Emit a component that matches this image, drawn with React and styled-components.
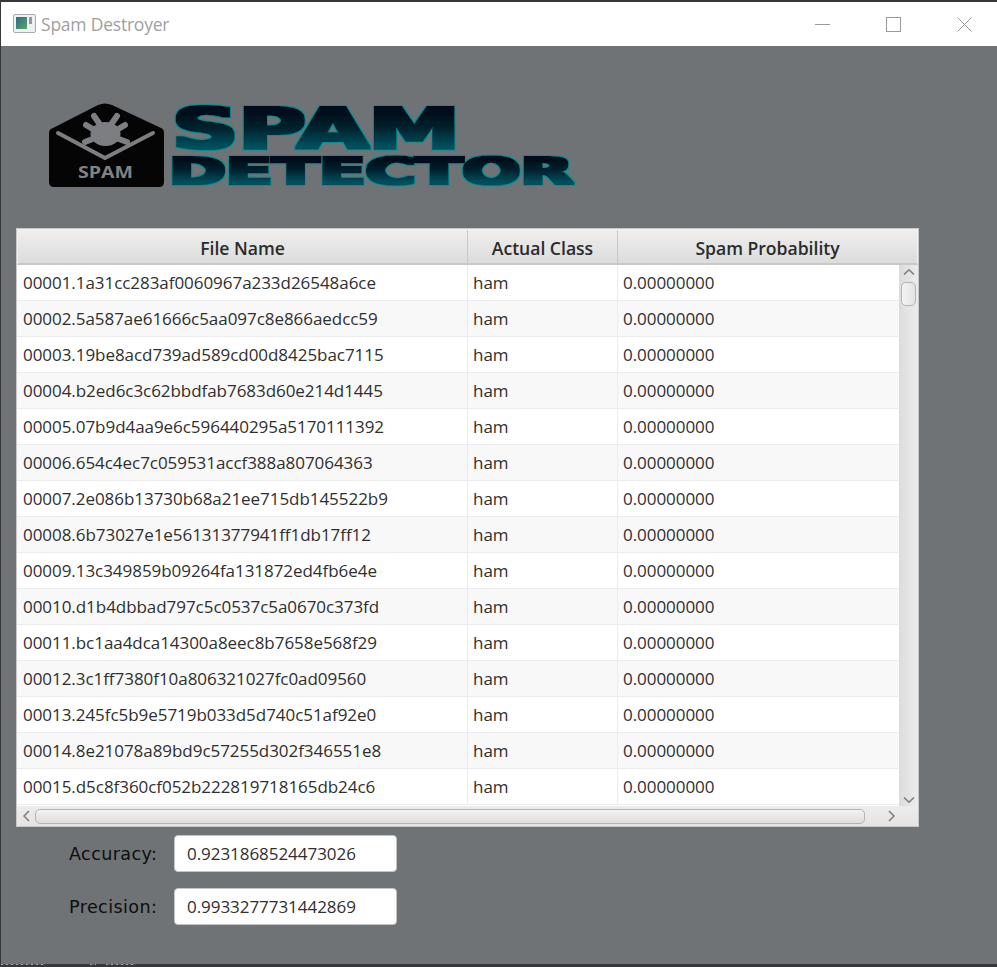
import React from 'react';
import styled, { createGlobalStyle } from 'styled-components';

const GlobalStyle = createGlobalStyle`
  html, body {
    margin: 0;
    padding: 0;
    background: #3a3c3e;
  }
  * { box-sizing: border-box; }
`;

const files = [
  '00001.1a31cc283af0060967a233d26548a6ce',
  '00002.5a587ae61666c5aa097c8e866aedcc59',
  '00003.19be8acd739ad589cd00d8425bac7115',
  '00004.b2ed6c3c62bbdfab7683d60e214d1445',
  '00005.07b9d4aa9e6c596440295a5170111392',
  '00006.654c4ec7c059531accf388a807064363',
  '00007.2e086b13730b68a21ee715db145522b9',
  '00008.6b73027e1e56131377941ff1db17ff12',
  '00009.13c349859b09264fa131872ed4fb6e4e',
  '00010.d1b4dbbad797c5c0537c5a0670c373fd',
  '00011.bc1aa4dca14300a8eec8b7658e568f29',
  '00012.3c1ff7380f10a806321027fc0ad09560',
  '00013.245fc5b9e5719b033d5d740c51af92e0',
  '00014.8e21078a89bd9c57255d302f346551e8',
  '00015.d5c8f360cf052b222819718165db24c6',
];

const Page = styled.div`
  width: 997px;
  height: 967px;
  display: flex;
  flex-direction: column;
  padding: 2px 0 0 1px;
  background: #35373a;
  overflow: hidden;
`;

const Window = styled.div`
  flex: 1;
  min-height: 0;
  display: flex;
  flex-direction: column;
  background: #6f7376;
`;

/* bit of the desktop that shows under the window */
const DesktopStrip = styled.div`
  height: 3px;
  flex: none;
  display: flex;
  align-items: flex-start;
  background: #35373a;
`;

const DesktopMark = styled.div`
  width: ${props => props.$w}px;
  margin-right: ${props => props.$gap}px;
  height: 1px;
  background: repeating-linear-gradient(90deg, #a2a4a6 0 2px, #4a4c4e 2px 5px);
`;

const TitleBar = styled.div`
  height: 44px;
  flex: none;
  display: flex;
  align-items: center;
  padding-left: 12px;
  background: #fff;
`;

const IconSvg = styled.svg`
  margin-bottom: 2px;
`;

const AppTitle = styled.span`
  margin-left: 5px;
  font: 17.5px 'Open Sans', sans-serif;
  letter-spacing: -0.22px;
  color: #9f9f9f;
`;

const WinButtons = styled.div`
  margin-left: auto;
  display: flex;
  align-items: center;
  gap: 6px;
`;

const WinButton = styled.div`
  width: 65px;
  display: flex;
  justify-content: center;
`;

const Content = styled.div`
  flex: 1;
  padding: 57px 0 0 15px;
`;

const LogoRow = styled.div`
  display: flex;
  height: 125px;
  padding-left: 32px;
`;

const LogoSvg = styled.svg`
  margin: -10px 0 0 5px;
`;

const Frame = styled.div`
  width: 903px;
  height: 599px;
  display: flex;
  flex-direction: column;
  border: 1px solid #c8c8c8;
  background: #fff;
`;

const HeaderRow = styled.div`
  height: 36px;
  flex: none;
  display: grid;
  grid-template-columns: 450px 150px 1fr;
  border: 1px solid #f1f1f1;
  border-bottom: 2px solid #c8c8c8;
  background: linear-gradient(#efefef, #dcdcdc);
`;

const HeaderCell = styled.div`
  display: flex;
  align-items: center;
  justify-content: center;
  padding-top: 3px;
  border-right: 1px solid #c8c8c8;
  font: 600 17.6px 'Open Sans', sans-serif;
  letter-spacing: -0.02px;
  color: #2b2b2b;

  &:last-child { border-right: 0; }
`;

const BodyRow = styled.div`
  flex: 1;
  min-height: 0;
  display: flex;
`;

const Rows = styled.div`
  flex: 1;
  overflow: hidden;
`;

const Row = styled.div`
  height: 36px;
  display: grid;
  grid-template-columns: 451px 150px 1fr;
  border-bottom: 1px solid #ececec;
  background: ${props => props.$odd ? '#f8f8f8' : '#fff'};
`;

const Cell = styled.div`
  display: flex;
  align-items: center;
  padding-left: 5px;
  border-right: 1px solid #ececec;
  font: 17px 'Open Sans', sans-serif;
  letter-spacing: -0.05px;
  color: #2f2f2f;

  &:first-child { padding-left: 6px; }
  &:last-child { border-right: 0; }
`;

const VScroll = styled.div`
  width: 19px;
  flex: none;
  display: flex;
  flex-direction: column;
  align-items: center;
  padding-top: 4px;
  background: linear-gradient(90deg, #dcdcdc, #ececec);
`;

const VThumb = styled.div`
  width: 15px;
  height: 24px;
  margin-top: 7px;
  border: 1px solid #b4b4b4;
  border-radius: 5px;
  background: linear-gradient(90deg, #f4f4f4, #e2e2e2);
`;

const VEnd = styled.div`
  margin-top: auto;
  padding-bottom: 3px;
  display: flex;
`;

const HScroll = styled.div`
  height: 20px;
  flex: none;
  display: flex;
  align-items: center;
  padding: 0 23px 0 6px;
  gap: 5px;
  background: linear-gradient(#ececec, #e4e4e4);
`;

const HThumb = styled.div`
  flex: 1;
  height: 15px;
  margin-right: 18px;
  border: 1px solid #b4b4b4;
  border-radius: 5px;
  background: linear-gradient(#f2f2f2, #dedede);
`;

const Stats = styled.div`
  display: flex;
  flex-direction: column;
  gap: 16px;
  padding: 8px 0 0 53px;
`;

const StatRow = styled.div`
  display: flex;
  align-items: center;
`;

const StatLabel = styled.span`
  width: 105px;
  font: 17.6px 'DejaVu Sans', sans-serif;
  letter-spacing: 0.38px;
  color: #0e0e0e;
`;

const StatValue = styled.div`
  width: 223px;
  height: 37px;
  display: flex;
  align-items: center;
  padding-left: 12px;
  border: 1px solid #c4c4c4;
  border-radius: 4px;
  background: #fff;
  font: 17px 'Open Sans', sans-serif;
  letter-spacing: -0.05px;
  color: #2f2f2f;
`;

const AppIcon = () => (
  <IconSvg width="23" height="19" viewBox="0 0 23 19">
    <defs>
      <linearGradient id="appIconFill" x1="0" y1="0" x2="1" y2="1">
        <stop offset="0" stopColor="#2c6a92" />
        <stop offset="1" stopColor="#5aa860" />
      </linearGradient>
    </defs>
    <rect x="0.5" y="0.5" width="22" height="18" rx="1.5" fill="#eef0f2" stroke="#a6acb2" />
    <rect x="3" y="3" width="11" height="12" fill="url(#appIconFill)" />
    <rect x="16" y="3" width="3" height="7" fill="#8d9aa0" />
  </IconSvg>
);

const Minimize = () => (
  <svg width="15" height="15" viewBox="0 0 15 15">
    <path d="M0 7.5H15" stroke="#9a9a9a" />
  </svg>
);

const Maximize = () => (
  <svg width="15" height="15" viewBox="0 0 15 15">
    <rect x="0.5" y="0.5" width="14" height="14" fill="none" stroke="#9a9a9a" />
  </svg>
);

const Close = () => (
  <svg width="15" height="15" viewBox="0 0 15 15">
    <path d="M0.5 0.5L14.5 14.5M14.5 0.5L0.5 14.5" stroke="#9a9a9a" />
  </svg>
);

const Chevron = ({ d, w = 12, h = 6 }) => (
  <svg width={w} height={h} viewBox={`0 0 ${w} ${h}`}>
    <path d={d} fill="none" stroke="#7b7b7b" strokeWidth="1.5" />
  </svg>
);

const SpamBadge = () => (
  <svg width="117" height="85" viewBox="0 0 117 85">
    <path
      d="M5 25L50 2Q57 -1 64 2L113 25Q116 26 116 30V79Q116 84 111 84H6Q1 84 1 79V30Q1 26 5 25Z"
      fill="#050505"
    />
    <path d="M10 30L57 55L105 30" fill="none" stroke="#7c7e81" strokeWidth="4" strokeLinecap="round" />
    <g stroke="#7c7e81" strokeWidth="6" strokeLinecap="round" fill="none">
      <path d="M46 13L53 23M69 13L62 23M38 22L48 28M77 22L67 28M37 39L47 35M79 39L68 35" />
    </g>
    <ellipse cx="57.5" cy="31" rx="15" ry="12" fill="#7c7e81" />
    <text
      x="30"
      y="75"
      textLength="55"
      lengthAdjust="spacingAndGlyphs"
      fontFamily="'Open Sans', sans-serif"
      fontWeight="700"
      fontSize="16.5"
      fill="#808285"
    >
      SPAM
    </text>
  </svg>
);

const LogoWords = () => (
  <LogoSvg width="412" height="100" viewBox="0 -10 412 100">
    <defs>
      <linearGradient id="logoFill" x1="0" y1="0" x2="0" y2="1">
        <stop offset="0.3" stopColor="#02101a" />
        <stop offset="0.5" stopColor="#03222e" />
        <stop offset="0.82" stopColor="#055563" />
      </linearGradient>
      <filter id="logoFat" x="-5%" y="-20%" width="110%" height="140%">
        <feMorphology in="SourceGraphic" operator="dilate" radius="3 1.2" result="fat" />
        <feMorphology in="fat" operator="dilate" radius="1" result="outer" />
        <feFlood floodColor="#0f8d92" />
        <feComposite in2="outer" operator="in" result="edge" />
        <feMerge>
          <feMergeNode in="edge" />
          <feMergeNode in="fat" />
        </feMerge>
      </filter>
    </defs>
    <text
      x="2"
      y="46"
      textLength="288"
      lengthAdjust="spacingAndGlyphs"
      fontFamily="'DejaVu Sans', sans-serif"
      fontWeight="700"
      fontSize="57"
      fill="url(#logoFill)"
      filter="url(#logoFat)"
    >
      SPAM
    </text>
    <text
      x="-1"
      y="81"
      textLength="404"
      lengthAdjust="spacingAndGlyphs"
      fontFamily="'DejaVu Sans', sans-serif"
      fontWeight="700"
      fontSize="38"
      fill="url(#logoFill)"
      filter="url(#logoFat)"
    >
      DETECTOR
    </text>
  </LogoSvg>
);

export default function App() {
  return (
    <Page>
      <GlobalStyle />
      <Window>
        <TitleBar>
          <AppIcon />
          <AppTitle>Spam Destroyer</AppTitle>
          <WinButtons>
            <WinButton><Minimize /></WinButton>
            <WinButton><Maximize /></WinButton>
            <WinButton><Close /></WinButton>
          </WinButtons>
        </TitleBar>
        <Content>
          <LogoRow>
            <SpamBadge />
            <LogoWords />
          </LogoRow>
          <Frame>
            <HeaderRow>
              <HeaderCell>File Name</HeaderCell>
              <HeaderCell>Actual Class</HeaderCell>
              <HeaderCell>Spam Probability</HeaderCell>
            </HeaderRow>
            <BodyRow>
              <Rows>
                {files.map((name, i) => (
                  <Row key={name} $odd={i % 2 === 1}>
                    <Cell>{name}</Cell>
                    <Cell>ham</Cell>
                    <Cell>0.00000000</Cell>
                  </Row>
                ))}
              </Rows>
              <VScroll>
                <Chevron d="M1 5.5L6 0.8L11 5.5" />
                <VThumb />
                <VEnd><Chevron d="M1 0.5L6 5.2L11 0.5" /></VEnd>
              </VScroll>
            </BodyRow>
            <HScroll>
              <Chevron w={7} h={12} d="M6 1L1 6L6 11" />
              <HThumb />
              <Chevron w={7} h={12} d="M1 1L6 6L1 11" />
            </HScroll>
          </Frame>
          <Stats>
            <StatRow>
              <StatLabel>Accuracy:</StatLabel>
              <StatValue>0.9231868524473026</StatValue>
            </StatRow>
            <StatRow>
              <StatLabel>Precision:</StatLabel>
              <StatValue>0.9933277731442869</StatValue>
            </StatRow>
          </Stats>
        </Content>
      </Window>
      <DesktopStrip>
        <DesktopMark $w={45} $gap={44} />
        <DesktopMark $w={6} $gap={10} />
        <DesktopMark $w={30} $gap={0} />
      </DesktopStrip>
    </Page>
  );
}
